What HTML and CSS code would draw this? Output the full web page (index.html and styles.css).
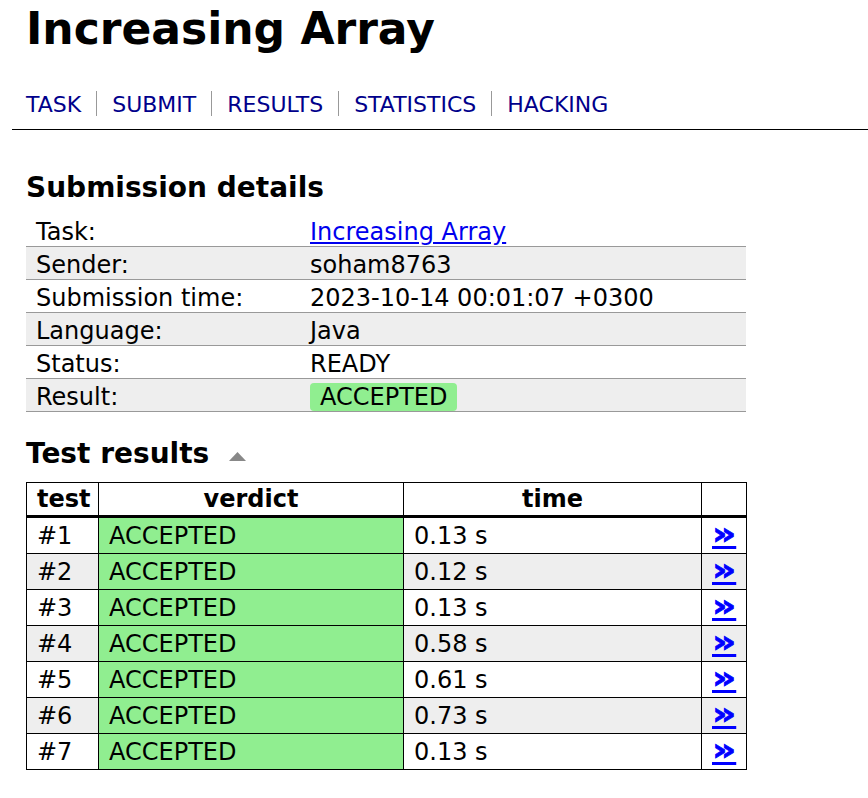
FILE: index.html
```html
<!DOCTYPE html>
<html>
<head>
<meta charset="utf-8">
<title>Increasing Array</title>
<link rel="stylesheet" href="styles.css">
</head>
<body>
<div class="skeleton">
  <div class="title-block">
    <h1>Increasing Array</h1>
    <ul class="nav">
      <li><a href="#">TASK</a></li>
      <li><a href="#">SUBMIT</a></li>
      <li><a href="#">RESULTS</a></li>
      <li><a href="#">STATISTICS</a></li>
      <li><a href="#">HACKING</a></li>
    </ul>
  </div>
  <div class="content">
    <h2>Submission details</h2>
    <table class="summary">
      <tr><td class="label">Task:</td><td><a class="task-link" href="#">Increasing Array</a></td></tr>
      <tr><td class="label">Sender:</td><td>soham8763</td></tr>
      <tr><td class="label">Submission time:</td><td>2023-10-14 00:01:07 +0300</td></tr>
      <tr><td class="label">Language:</td><td>Java</td></tr>
      <tr><td class="label">Status:</td><td>READY</td></tr>
      <tr><td class="label">Result:</td><td><span class="badge">ACCEPTED</span></td></tr>
    </table>
    <h2>Test results <svg class="toggle" width="17" height="9" viewBox="0 0 17 9"><polygon points="0,9 8.5,0 17,9" fill="#888"/></svg></h2>
    <table class="tests">
      <colgroup><col class="c-test"><col class="c-verdict"><col class="c-time"><col class="c-link"></colgroup>
      <thead>
        <tr><th>test</th><th>verdict</th><th>time</th><th></th></tr>
      </thead>
      <tbody>
        <tr><td>#1</td><td class="ok">ACCEPTED</td><td>0.13 s</td><td><a class="more" href="#">»</a></td></tr>
        <tr><td>#2</td><td class="ok">ACCEPTED</td><td>0.12 s</td><td><a class="more" href="#">»</a></td></tr>
        <tr><td>#3</td><td class="ok">ACCEPTED</td><td>0.13 s</td><td><a class="more" href="#">»</a></td></tr>
        <tr><td>#4</td><td class="ok">ACCEPTED</td><td>0.58 s</td><td><a class="more" href="#">»</a></td></tr>
        <tr><td>#5</td><td class="ok">ACCEPTED</td><td>0.61 s</td><td><a class="more" href="#">»</a></td></tr>
        <tr><td>#6</td><td class="ok">ACCEPTED</td><td>0.73 s</td><td><a class="more" href="#">»</a></td></tr>
        <tr><td>#7</td><td class="ok">ACCEPTED</td><td>0.13 s</td><td><a class="more" href="#">»</a></td></tr>
      </tbody>
    </table>
  </div>
</div>
</body>
</html>
```
FILE: styles.css
```css
body {
  margin: 0;
  font-family: "DejaVu Sans", Verdana, sans-serif;
  color: #000;
  background: #fff;
}
.skeleton {
  padding-left: 12px;
}
.title-block {
  padding: 3px 0 13px 14px;
  border-bottom: 1px solid #000;
}
h1 {
  margin: 0;
  font-size: 44px;
  line-height: 51px;
  font-weight: bold;
}
.nav {
  list-style: none;
  margin: 37px 0 0;
  padding: 0;
  display: flex;
  font-size: 22px;
}
.nav li {
  height: 25px;
  line-height: 27px;
  padding: 0 15px 0 15px;
  border-left: 1px solid #999;
}
.nav li:first-child {
  border-left: 0;
  padding-left: 0;
}
.nav a {
  color: #00008b;
  text-decoration: none;
}
.content {
  padding-left: 14px;
}
h2 {
  font-size: 28px;
  line-height: 33px;
  font-weight: bold;
  margin: 41px 0 10px;
}
.summary + h2 {
  margin: 25px 0 12px;
}
.toggle {
  margin-left: 10px;
  vertical-align: 2px;
}
.summary {
  border-collapse: collapse;
  width: 720px;
  font-size: 24px;
  line-height: 28px;
}
.summary td {
  padding: 4px 10px 0;
  border-bottom: 1px solid #999;
}
.summary td.label {
  width: 254px;
}
.summary tr:nth-child(even) td {
  background: #eee;
}
.task-link {
  color: #0000ee;
}
.badge {
  display: inline-block;
  background: #90ee90;
  border-radius: 4px;
  padding: 0 10px;
  margin-top: -1px;
}
.tests {
  border-collapse: collapse;
  table-layout: fixed;
  width: 720px;
  font-size: 24px;
  line-height: 28px;
}
.c-test { width: 72px; }
.c-verdict { width: 305px; }
.c-time { width: 298px; }
.c-link { width: 45px; }
.tests th {
  border: 1px solid #000;
  border-bottom: 3px solid #000;
  padding: 2px 10px;
  text-align: center;
  font-weight: bold;
}
.tests td {
  border: 1px solid #000;
  padding: 4px 10px 3px;
  text-align: left;
  height: 28px;
}
.tests tbody tr:nth-child(even) td {
  background: #eee;
}
.tests td.ok,
.tests tbody tr:nth-child(even) td.ok {
  background: #90ee90;
}
.more {
  display: inline-block;
  vertical-align: top;
  height: 28px;
  margin-top: -2px;
  color: #0000ff;
  font-weight: bold;
  font-size: 30px;
  line-height: 28px;
  -webkit-text-stroke: 0.7px #0000ff;
  transform: scaleX(1.25);
  transform-origin: left center;
}
```
